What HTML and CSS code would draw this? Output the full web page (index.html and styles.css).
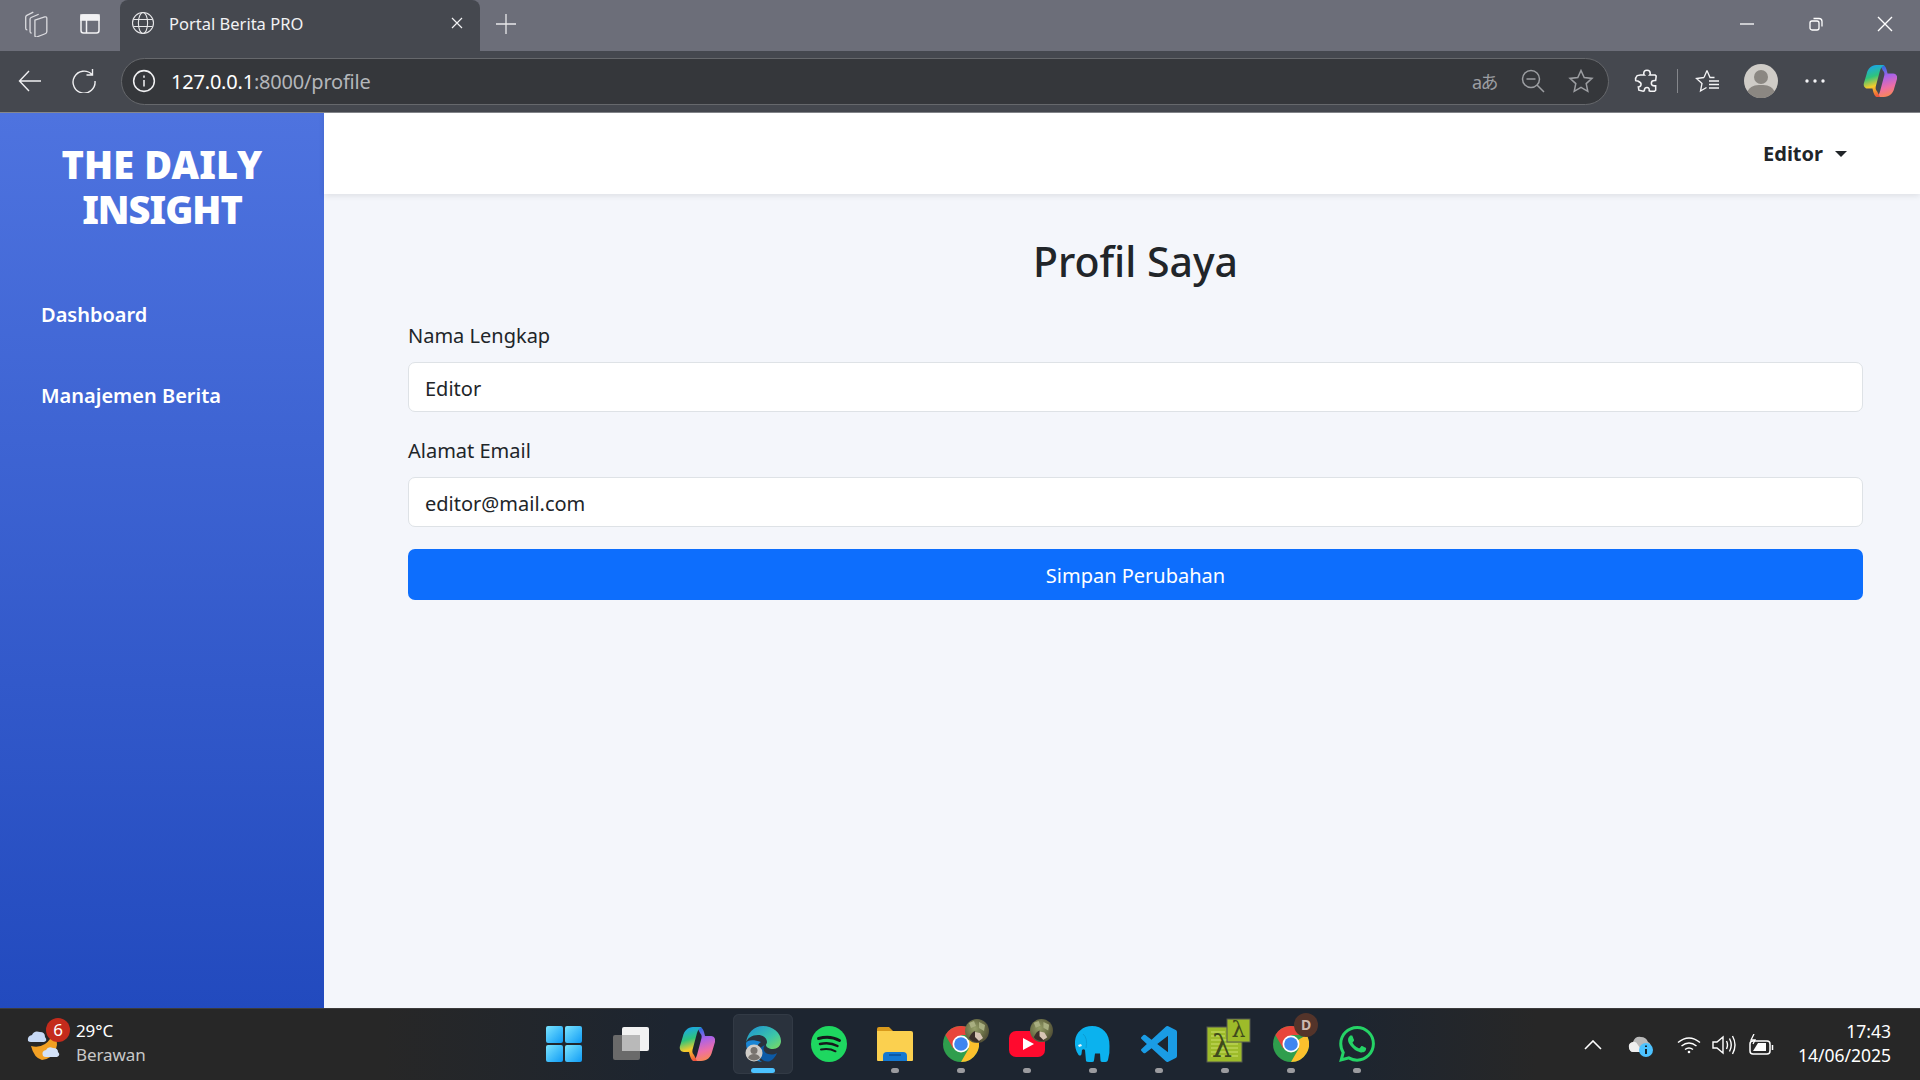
FILE: index.html
```html
<!DOCTYPE html>
<html lang="en">
<head>
  <meta charset="UTF-8">
  <title>Portal Berita PRO</title>
  <link rel="stylesheet" href="styles.css">
</head>
<body>

  <svg class="sprite" width="0" height="0">
    <defs>
      <linearGradient id="copA" x1=".4" y1="0" x2=".6" y2="1">
        <stop offset="0" stop-color="#1aa5ea"/><stop offset=".35" stop-color="#2fc47c"/><stop offset=".65" stop-color="#f6cc2b"/><stop offset="1" stop-color="#f0503a"/>
      </linearGradient>
      <linearGradient id="copB" x1=".4" y1="0" x2=".6" y2="1">
        <stop offset="0" stop-color="#1f6fe0"/><stop offset=".35" stop-color="#a862ea"/><stop offset=".7" stop-color="#ee6ea6"/><stop offset="1" stop-color="#f98a4e"/>
      </linearGradient>
      <linearGradient id="edgeA" x1="0" y1="0" x2="1" y2="1">
        <stop offset="0" stop-color="#1b8ed6"/><stop offset=".6" stop-color="#3cc6a8"/><stop offset="1" stop-color="#7fdc5c"/>
      </linearGradient>
      <linearGradient id="winA" x1="0" y1="0" x2="1" y2="1">
        <stop offset="0" stop-color="#7ae4ff"/><stop offset="1" stop-color="#0f9bf5"/>
      </linearGradient>
      <radialGradient id="camo" cx=".4" cy=".4" r=".7">
        <stop offset="0" stop-color="#97a06a"/><stop offset=".55" stop-color="#6d7148"/><stop offset="1" stop-color="#4a4632"/>
      </radialGradient>
      <symbol id="copilot" viewBox="0 0 36 36">
        <path d="M22 35h-9c3-1 4-3 5-6l4-15c1-3 1-5-1-7l-3-6h2c3 0 4 2 5 5l1 4h6c3 0 5 3 4 6l-3 10c-1 5-5 9-11 9z" fill="url(#copB)"/>
        <path d="M14 1h9c-3 1-4 3-5 6l-4 15c-1 3-1 5 1 7l3 6h-2c-3 0-4-2-5-5l-1-4H5c-3 0-5-3-4-6l3-10c1-5 5-9 10-9z" fill="url(#copA)"/>
      </symbol>
      <symbol id="chrome" viewBox="0 0 36 36">
        <circle cx="18" cy="18" r="18" fill="#2f9e4d"/>
        <path d="M18 18l-7.800 4.500L2.400 9A18 18 0 0 1 33.600 9H18z" fill="#e8453a"/>
        <path d="M18 18L33.600 9A18 18 0 0 1 18 36l7.800-13.500z" fill="#fbc02d"/>
        <circle cx="18" cy="18" r="8.500" fill="#fff"/>
        <circle cx="18" cy="18" r="6.800" fill="#3f86f0"/>
      </symbol>
      <symbol id="camoBadge" viewBox="0 0 24 24">
        <circle cx="12" cy="12" r="12" fill="url(#camo)"/>
        <path d="M4 4l5-2 2 5-5 2zM14 3l6 3-1 6-5-3z" fill="#a8ae80"/>
        <path d="M4 19c2-4 3-6 6-7l1 6 5 4c-4 2-9 1-12-3z" fill="#3b2f2a"/>
        <path d="M10 13l5 1 3 5-4 3-4-4z" fill="#d8c5b5"/>
      </symbol>
    </defs>
  </svg>

  <div class="tabstrip">
    <svg class="ico strip-a" viewBox="0 0 24 24" fill="none" stroke="#dcdce0" stroke-width="1.200">
      <path d="M11 8.500l9-3q2-.5 2 1.500v12q0 1.500-1.500 2l-8 3q-1.500.3-1.500-1.500z"/>
      <path d="M8 20.500q-1.500 0-1.500-1.500V7.500q0-1 1-1.500l7-3"/>
      <path d="M4 17.500q-1.500 0-1.500-1.500V5.500q0-1 1-1.500l6-3"/>
    </svg>
    <svg class="ico strip-b" viewBox="0 0 24 24" fill="none" stroke="#f2f2f4" stroke-width="1.500">
      <rect x="3" y="3" width="18" height="18" rx="2.500"/>
      <path d="M3 3h18v5H3z" fill="#f2f2f4"/>
      <path d="M8.500 8v13"/>
    </svg>
    <div class="tab">
      <svg class="ico" viewBox="0 0 24 24" fill="none" stroke="#e6e6e8" stroke-width="1.100">
        <circle cx="12" cy="12" r="10.500"/>
        <ellipse cx="12" cy="12" rx="4.600" ry="10.500"/>
        <path d="M2.300 8.500h19.400M2.300 15.500h19.400"/>
      </svg>
      <span class="tab-title">Portal Berita PRO</span>
      <svg class="tab-close" viewBox="0 0 12 12" stroke="#f2f2f4" stroke-width="1.200"><path d="M1 1l10 10M11 1L1 11"/></svg>
    </div>
    <svg class="tab-plus" viewBox="0 0 22 22" stroke="#e8e8ea" stroke-width="1.300"><path d="M11 1v20M1 11h20"/></svg>
    <div class="win-btns">
      <svg class="ico" viewBox="0 0 16 16" stroke="#fff" stroke-width="1.300"><path d="M1 8h14"/></svg>
      <svg class="ico" viewBox="0 0 16 16" fill="none" stroke="#fff" stroke-width="1.300"><rect x="2" y="5" width="9" height="9" rx="2"/><path d="M5.500 2.500H11q3 0 3 3v5"/></svg>
      <svg class="ico" viewBox="0 0 16 16" stroke="#fff" stroke-width="1.400"><path d="M1 1l14 14M15 1L1 15"/></svg>
    </div>
  </div>

  <div class="toolbar">
    <svg class="ico tool-back" viewBox="0 0 24 24" fill="none" stroke="#f0f0f2" stroke-width="1.400"><path d="M23 12H1.500M11 2L1.500 12 11 22"/></svg>
    <svg class="ico tool-reload" viewBox="0 0 24 24" fill="none" stroke="#f0f0f2" stroke-width="1.400"><path d="M20 5.500A11 11 0 1 0 23 12M20.500 0v6h-6"/></svg>
    <div class="addressbar">
      <span class="info-wrap">
        <svg class="ico" viewBox="0 0 22 22" fill="none" stroke="#f0f0f2" stroke-width="1.400"><circle cx="11" cy="11" r="9.500"/><path d="M11 10v6M11 6v2"/></svg>
      </span>
      <span class="url"><span class="url-host">127.0.0.1</span>:8000/profile</span>
      <span class="addr-actions">
        <span class="translate">aあ</span>
        <svg class="ico addr-ico" viewBox="0 0 24 24" fill="none" stroke="#9c9ea2" stroke-width="1.500"><circle cx="10" cy="10" r="8.500"/><path d="M16 16l7 7M5.500 10h9"/></svg>
        <svg class="ico addr-ico" viewBox="0 0 24 24" fill="none" stroke="#9c9ea2" stroke-width="1.500"><path d="M12 1.500l3.200 7 7.800.9-5.800 5.200 1.600 7.700L12 18.400l-6.800 3.900 1.600-7.700L1 9.400l7.800-.9z"/></svg>
      </span>
    </div>
    <svg class="ico tool-ext" viewBox="0 0 24 24" fill="none" stroke="#f4f4f6" stroke-width="1.400">
      <path d="M9 5q0-3 3-3t3 3q0 1-.5 1.500h5l1 1-.5 4h-1q-3 0-3 2.500t3 2.500h1v4l-1 1h-4l-1-.5q.5-3-2-3t-2.500 3l-1 .5-4-1-.5-3q2 0 2.500-2T3.500 12q-2 0-2-.5Q1 9 3 7l3-.5h3.500Q9 6 9 5z"/>
    </svg>
    <span class="tool-sep"></span>
    <svg class="ico tool-fav" viewBox="0 0 26 24" fill="none" stroke="#f4f4f6" stroke-width="1.300"><path d="M12 1.500l3 7h4.500M9 8.500L1.500 9.500l5.500 5-1.500 7.500 6-3.500M12 1.500L9 8.500M14 12h10M14 15.500h10M14 19h10"/></svg>
    <svg class="tool-avatar" viewBox="0 0 34 34">
      <circle cx="17" cy="17" r="17" fill="#cfccc7"/>
      <circle cx="17" cy="13" r="7" fill="#8b8782"/>
      <path d="M3.500 27.500C6 22 11 21 17 21s11 1 13.500 6.500A17 17 0 0 1 3.500 27.500z" fill="#8b8782"/>
    </svg>
    <svg class="tool-dots" viewBox="0 0 20 4" fill="#f4f4f6"><circle cx="2" cy="2" r="1.700"/><circle cx="10" cy="2" r="1.700"/><circle cx="18" cy="2" r="1.700"/></svg>
    <svg class="tool-copilot"><use href="#copilot"/></svg>
  </div>

  <div class="app">
    <aside class="sidebar">
      <div class="brand">THE DAILY<br><span class="brand-second">INSIGHT</span></div>
      <a class="side-link">Dashboard</a>
      <a class="side-link">Manajemen Berita</a>
    </aside>
    <div class="main">
      <nav class="topnav">
        <span class="user-menu">Editor<span class="caret"></span></span>
      </nav>
      <section class="content">
        <h2 class="page-title">Profil Saya</h2>
        <form>
          <div class="field">
            <label class="field-label">Nama Lengkap</label>
            <input class="field-input" type="text" value="Editor">
          </div>
          <div class="field">
            <label class="field-label">Alamat Email</label>
            <input class="field-input" type="email" value="editor@mail.com">
          </div>
          <button class="save-btn" type="button">Simpan Perubahan</button>
        </form>
      </section>
    </div>
  </div>

  <footer class="taskbar">
    <div class="weather">
      <svg class="weather-ico" viewBox="0 0 44 42">
        <path d="M4 27q8 2 14-2 6-4 8-12 6 8 3 17-4 10-14 11Q7 39 4 27z" fill="#f2a024"/>
        <path d="M1 22q-1-5 4-6 2-5 8-3 5 0 5 5 3 4-1 5H4q-2 0-3-1z" fill="#c7d9f5"/>
        <path d="M16 37q-2-5 3-6 2-4 7-2 5 0 5 4 3 3-1 5H19q-2 0-3-1z" fill="#d4e2f8"/>
        <circle cx="31" cy="11" r="12" fill="#c42b1c"/>
        <text class="weather-count" x="31" y="17" text-anchor="middle">6</text>
      </svg>
      <div class="weather-text">
        <div class="weather-temp">29°C</div>
        <div class="weather-desc">Berawan</div>
      </div>
    </div>

    <div class="task-icons">
      <div class="task-item">
        <svg class="ico-36" viewBox="0 0 36 36">
          <rect x="-1" y="0" width="17" height="17" rx="2" fill="url(#winA)"/>
          <rect x="18" y="0" width="17" height="17" rx="2" fill="url(#winA)"/>
          <rect x="-1" y="19" width="17" height="17" rx="2" fill="url(#winA)"/>
          <rect x="18" y="19" width="17" height="17" rx="2" fill="url(#winA)"/>
        </svg>
      </div>
      <div class="task-item">
        <svg class="ico-36" viewBox="0 0 36 36">
          <rect x="0" y="9" width="27" height="25" rx="2" fill="#6a6a6a"/>
          <rect x="9" y="1" width="27" height="24" rx="2" fill="#f2f2f2"/>
          <rect x="9" y="9" width="18" height="16" fill="#b9b9b9"/>
        </svg>
      </div>
      <div class="task-item">
        <svg class="ico-36"><use href="#copilot"/></svg>
      </div>
      <div class="task-item task-active">
        <svg class="ico-36" viewBox="0 0 36 36">
          <path d="M1 17C2 7 9 0 18 0c10 0 18 7 18 15 0 5-4 8-8 8-4 0-7-2-7-4 0-1 1-1.500 1-3 0-4-4-7-9-7-6 0-11 3-12 8z" fill="url(#edgeA)"/>
          <path d="M32 27c-2 1-3.500 1.500-5.500 1.500-5 0-8-3-8-6 0-1.500.6-2.500 1.500-3-5 .5-7 6-5.500 10 1.500 4 5 6.500 9 6 3.500-.5 6.500-4 8.500-8.500z" fill="#0c5aa6"/>
          <path d="M1 17c0 9 6 18 16 19-5-3-7-9-5-15 .5-2 2-4 4-5-8-3-14-2-15 1z" fill="#1a85d4"/>
          <circle cx="9" cy="27" r="8.500" fill="#cfccc7"/>
          <circle cx="9" cy="24.500" r="3.500" fill="#77736e"/>
          <path d="M3 32c1-3 3-4 6-4s5 1 6 4a8.500 8.500 0 0 1-12 0z" fill="#77736e"/>
        </svg>
        <span class="pill pill-active"></span>
      </div>
      <div class="task-item">
        <svg class="ico-36" viewBox="0 0 36 36">
          <circle cx="18" cy="18" r="18" fill="#1ed760"/>
          <g fill="none" stroke="#16181c" stroke-linecap="round">
            <path d="M7.500 12.500c7-2 15-1.500 21 2" stroke-width="3"/>
            <path d="M9 18c6-1.500 12-1 17.500 2" stroke-width="2.500"/>
            <path d="M10 23.500c5-1 10-.7 14.500 1.800" stroke-width="2"/>
          </g>
        </svg>
      </div>
      <div class="task-item">
        <svg class="ico-36" viewBox="0 0 36 36">
          <path d="M0 3q0-2 2-2h10l4 4v6H0z" fill="#d99a1c"/>
          <path d="M0 5h34q2 0 2 2v27q0 1-1 1H1q-1 0-1-1z" fill="#fbd04f"/>
          <path d="M6 35v-5q0-4 4-4h16q4 0 4 4v5z" fill="#1478d2"/>
          <path d="M12 29h12" stroke="#0b4f96" stroke-width="1.500"/>
        </svg>
        <span class="pill"></span>
      </div>
      <div class="task-item">
        <svg class="ico-36"><use href="#chrome"/><use href="#camoBadge" x="22" y="-7" width="24" height="24"/></svg>
        <span class="pill"></span>
      </div>
      <div class="task-item">
        <svg class="ico-36" viewBox="0 0 36 36">
          <rect x="0" y="5" width="36" height="26" rx="7" fill="#ff0a2e"/>
          <path d="M14 12l11 6-11 6z" fill="#fff"/>
          <use href="#camoBadge" x="21" y="-7" width="23" height="23"/>
        </svg>
        <span class="pill"></span>
      </div>
      <div class="task-item">
        <svg class="ico-36" viewBox="0 0 36 36">
          <path d="M17 0C8 0 1 6 0 15c-.5 5 1 10 3 13 1 2 3 2 3.500 0l.5-4c1-1 2-1 3 0l1 11q.2 1 3 1h3q2 0 2-1.500l1-7h5l.5 7q0 1.500 3 1.500h2q2 0 2.500-2 2-8 1.500-14C35 7 27 0 17 0z" fill="#0bb2ee"/>
          <path d="M3 19l3-1 1 2-3 1z" fill="#e7f5fb"/>
          <path d="M8 8q5 4 3 14" fill="none" stroke="#0a9cd4" stroke-width="1"/>
        </svg>
        <span class="pill"></span>
      </div>
      <div class="task-item">
        <svg class="ico-36" viewBox="0 0 24 24">
          <path d="M23.150 2.587L18.210.21a1.494 1.494 0 0 0-1.705.29l-9.460 8.630-4.120-3.128a.999.999 0 0 0-1.276.057L.327 7.261A1 1 0 0 0 .326 8.740L3.899 12 .326 15.260a1 1 0 0 0 .001 1.479L1.650 17.940a.999.999 0 0 0 1.276.057l4.120-3.128 9.460 8.630a1.492 1.492 0 0 0 1.704.29l4.942-2.377A1.500 1.500 0 0 0 24 20.060V3.939a1.500 1.500 0 0 0-.850-1.352zm-5.146 14.861L10.826 12l7.178-5.448v10.896z" fill="#1a9ce5"/>
        </svg>
        <span class="pill"></span>
      </div>
      <div class="task-item">
        <svg class="ico-36" viewBox="0 0 36 36">
          <rect x="0" y="1" width="35" height="35" fill="#9dbb2a" stroke="#55584e" stroke-width="1"/>
          <path d="M4 6h14M4 10h14M4 14h27M4 18h27M4 22h27M4 26h27M4 30h27" stroke="#bcd454" stroke-width="1.500"/>
          <text class="lambda lambda-lg" x="15" y="31" text-anchor="middle">λ</text>
          <rect x="20" y="-7" width="23" height="23" fill="#9dbb2a" stroke="#55584e" stroke-width="1"/>
          <text class="lambda" x="31.500" y="11" text-anchor="middle">λ</text>
        </svg>
        <span class="pill"></span>
      </div>
      <div class="task-item">
        <svg class="ico-36">
          <use href="#chrome"/>
          <circle cx="33" cy="-1" r="12" fill="#54342a"/>
          <text class="chrome-letter" x="33" y="4" text-anchor="middle">D</text>
        </svg>
        <span class="pill"></span>
      </div>
      <div class="task-item">
        <svg class="ico-36" viewBox="0 0 24 24">
          <path d="M17.472 14.382c-.297-.149-1.758-.867-2.030-.967-.273-.099-.471-.148-.670.150-.197.297-.767.966-.940 1.164-.173.199-.347.223-.644.075-.297-.150-1.255-.463-2.390-1.475-.883-.788-1.480-1.761-1.653-2.059-.173-.297-.018-.458.130-.606.134-.133.298-.347.446-.520.149-.174.198-.298.298-.497.099-.198.050-.371-.025-.520-.075-.149-.669-1.612-.916-2.207-.242-.579-.487-.500-.669-.510-.173-.008-.371-.010-.570-.010-.198 0-.520.074-.792.372-.272.297-1.040 1.016-1.040 2.479 0 1.462 1.065 2.875 1.213 3.074.149.198 2.096 3.200 5.077 4.487.709.306 1.262.489 1.694.625.712.227 1.360.195 1.871.118.571-.085 1.758-.719 2.006-1.413.248-.694.248-1.289.173-1.413-.074-.124-.272-.198-.570-.347m-5.421 7.403h-.004a9.870 9.870 0 0 1-5.031-1.378l-.361-.214-3.741.982.998-3.648-.235-.374a9.860 9.860 0 0 1-1.510-5.260c.001-5.450 4.436-9.884 9.888-9.884 2.640 0 5.122 1.030 6.988 2.898a9.825 9.825 0 0 1 2.893 6.994c-.003 5.450-4.437 9.884-9.885 9.884m8.413-18.297A11.815 11.815 0 0 0 12.050 0C5.495 0 .160 5.335.157 11.892c0 2.096.547 4.142 1.588 5.945L.057 24l6.305-1.654a11.882 11.882 0 0 0 5.683 1.448h.005c6.554 0 11.890-5.335 11.893-11.893a11.821 11.821 0 0 0-3.480-8.413z" fill="#25d366"/>
        </svg>
        <span class="pill"></span>
      </div>
    </div>

    <div class="tray">
      <svg class="tray-chevron" viewBox="0 0 18 10" fill="none" stroke="#fff" stroke-width="1.600"><path d="M1 9l8-8 8 8"/></svg>
      <svg class="tray-cloud" viewBox="0 0 26 24">
        <path d="M1 15q-1-5 4-6 2-6 8-5 5 0 7 5 3 1 3 6 0 4-4 4H5q-3 0-4-4z" fill="#b9b9b9"/>
        <path d="M1 15q-1-5 4-6 3-1 5 3l5 7H5q-3 0-4-4z" fill="#eeeeee"/>
        <circle cx="18" cy="17" r="7" fill="#4cc2ff"/>
        <path d="M18 16v5M18 12.500v1.600" stroke="#111" stroke-width="1.800"/>
      </svg>
      <svg class="tray-wifi" viewBox="0 0 24 18" fill="none" stroke="#fff" stroke-width="1.500">
        <path d="M1 6.500q11-9 22 0M4.500 10q7.500-6 15 0M8 13.500q4-3 8 0"/>
        <circle cx="12" cy="16" r="1.300" fill="#fff" stroke="none"/>
      </svg>
      <svg class="tray-volume" viewBox="0 0 24 20" fill="none" stroke="#fff" stroke-width="1.400">
        <path d="M1 7v6h4l6 5V2L5 7zM14.500 6q2 4 0 8M17.500 3.500q3.500 6.500 0 13M20.500 1q5 9 0 18"/>
      </svg>
      <svg class="tray-battery" viewBox="0 0 26 22" fill="none" stroke="#fff" stroke-width="1.500">
        <rect x="2" y="7" width="20" height="13" rx="3"/>
        <path d="M24.500 11v5"/>
        <path d="M5 17l5-8h8v8z" fill="#fff" stroke="none"/>
        <path d="M6 0L3 6h4l-2 4" stroke-width="1.300"/>
      </svg>
      <div class="clock">
        <div>17:43</div>
        <div>14/06/2025</div>
      </div>
    </div>
  </footer>

</body>
</html>
```

FILE: styles.css
```css
:root {
  --sans: "Noto Sans", "Open Sans", Arial, sans-serif;
}

* {
  box-sizing: border-box;
}

html, body {
  height: 100%;
}

body {
  margin: 0;
  display: flex;
  flex-direction: column;
  height: 1080px;
  overflow: hidden;
  font-family: var(--sans);
  color: #212529;
  background: #f4f6fb;
}

.sprite {
  display: block;
  height: 0;
}

.ico {
  display: block;
  flex: none;
  width: 24px;
  height: 24px;
}

/* browser tab strip */
.tabstrip {
  display: flex;
  align-items: center;
  height: 51px;
  flex: none;
  padding: 0 0 3px 24px;
  background: #6c6e79;
}

.strip-a {
  width: 26px;
  height: 26px;
  margin-left: -1px;
}

.strip-b {
  margin-left: 29px;
  margin-right: 18px;
}

.tab {
  display: flex;
  align-items: center;
  align-self: stretch;
  width: 360px;
  margin-bottom: -3px;
  padding: 0 17px 5px 11px;
  background: #45484f;
  border-radius: 8px 8px 0 0;
  color: #f2f2f4;
  font-size: 16.500px;
}

.tab-title {
  flex: 1;
  margin-left: 14px;
}

.tab-close {
  width: 12px;
  height: 12px;
}

.tab-plus {
  width: 22px;
  height: 22px;
  margin-left: 15px;
}

.win-btns {
  display: flex;
  gap: 45px;
  margin-left: auto;
  padding-right: 23px;
}

.win-btns .ico {
  width: 24px;
  height: 16px;
}

/* browser toolbar */
.toolbar {
  display: flex;
  align-items: center;
  height: 62px;
  flex: none;
  padding-left: 18px;
  padding-bottom: 1px;
  background: #45484f;
  border-bottom: 1px solid #85878c;
}

.tool-reload {
  margin-left: 30px;
}

.addressbar {
  display: flex;
  align-items: center;
  width: 1488px;
  height: 47px;
  margin-left: 25px;
  padding-left: 7px;
  background: #35373b;
  border: 1.500px solid #66686c;
  border-radius: 24px;
}

.info-wrap {
  display: flex;
  align-items: center;
  justify-content: center;
  width: 30px;
  height: 34px;
}

.url {
  margin-left: 12px;
  color: #b4b6ba;
  font-size: 20px;
  letter-spacing: -.2px;
}

.url-host {
  color: #fff;
}

.addr-actions {
  display: flex;
  align-items: center;
  gap: 22px;
  margin-left: auto;
  padding-right: 14px;
}

.translate {
  width: 26px;
  color: #9c9ea2;
  font-family: "Noto Sans", "Noto Sans CJK JP", sans-serif;
  font-size: 18px;
  letter-spacing: -1.500px;
  white-space: nowrap;
}

.addr-ico {
  width: 26px;
}

.tool-ext {
  width: 26px;
  height: 26px;
  margin-left: 25px;
}

.tool-sep {
  width: 1px;
  height: 24px;
  margin-left: 17px;
  background: #85878c;
}

.tool-fav {
  width: 26px;
  height: 24px;
  margin-left: 17px;
}

.tool-avatar {
  width: 34px;
  height: 34px;
  margin-left: 23px;
}

.tool-dots {
  width: 20px;
  height: 4px;
  margin-left: 27px;
}

.tool-copilot {
  width: 34px;
  height: 34px;
  margin-left: 38px;
}

/* page */
.app {
  display: flex;
  flex: 1;
  min-height: 0;
}

.sidebar {
  width: 324px;
  flex: none;
  padding: 29px 41px 0;
  background: linear-gradient(180deg, #4e73df, #224abe);
  color: #fff;
}

.brand {
  margin: 0 -41px 61px;
  text-align: center;
  font-size: 38px;
  font-weight: 900;
  line-height: 45px;
  letter-spacing: .1px;
}

.brand-second {
  letter-spacing: -1px;
}

.side-link {
  display: block;
  height: 81px;
  padding-top: 7px;
  font-size: 20px;
  font-weight: 600;
  line-height: 30px;
}

.main {
  flex: 1;
  display: flex;
  flex-direction: column;
  min-width: 0;
}

.topnav {
  display: flex;
  align-items: center;
  justify-content: flex-end;
  height: 81px;
  flex: none;
  padding-right: 73px;
  background: #fff;
  box-shadow: 0 2px 6px rgba(0, 0, 0, .09);
}

.user-menu {
  display: flex;
  align-items: center;
  font-size: 20px;
  font-weight: 700;
}

.caret {
  width: 0;
  height: 0;
  margin-left: 12px;
  border-top: 6px solid #212529;
  border-left: 6px solid transparent;
  border-right: 6px solid transparent;
}

.content {
  padding: 37px 57px 0 84px;
}

.page-title {
  margin: 0 0 31px;
  text-align: center;
  font-size: 41px;
  font-weight: 500;
  line-height: 60px;
}

.field {
  margin-bottom: 25px;
}

.field-label {
  display: block;
  margin-bottom: 12px;
  font-size: 20px;
  line-height: 28px;
}

.field-input {
  display: block;
  width: 100%;
  height: 50px;
  padding: 2px 16px 0;
  border: 1px solid #dee2e6;
  border-radius: 7px;
  background: #fff;
  color: #212529;
  font-family: var(--sans);
  font-size: 20px;
}

.save-btn {
  display: block;
  width: 100%;
  height: 51px;
  margin-top: -3px;
  padding: 2px 0 0;
  border: none;
  border-radius: 7px;
  background: #0d6efd;
  color: #fff;
  font-family: var(--sans);
  font-size: 20px;
}

/* windows taskbar */
.taskbar {
  display: flex;
  height: 72px;
  flex: none;
  background: linear-gradient(90deg, #272727 0, #272727 20%, #1d2530 35%, #1d2530 70%, #272727 80%);
  border-top: 1px solid #3c3c3c;
  color: #fff;
}

.weather {
  display: flex;
  width: 532px;
  flex: none;
  padding: 10px 0 0 27px;
}

.weather-ico {
  width: 44px;
  height: 42px;
  overflow: visible;
}

.weather-count {
  font: 17px var(--sans);
  fill: #fff;
}

.weather-text {
  margin-left: 5px;
  font-size: 17px;
  line-height: 24px;
  letter-spacing: -.1px;
}

.weather-desc {
  color: #c8c8c8;
}

.task-icons {
  display: flex;
}

.task-item {
  display: flex;
  flex-direction: column;
  align-items: center;
  width: 60px;
  height: 60px;
  margin: 5px 3px;
  padding-top: 12px;
  border-radius: 6px;
}

.task-active {
  background: #2a323d;
  box-shadow: inset 0 0 0 1px #323a45;
}

.ico-36 {
  display: block;
  flex: none;
  width: 36px;
  height: 36px;
  overflow: visible;
}

.pill {
  width: 8px;
  height: 5px;
  margin-top: 6px;
  border-radius: 3px;
  background: #9b9b9f;
}

.pill-active {
  width: 24px;
  background: #4cc2ff;
}

.lambda {
  font: 400 22px "DejaVu Serif", serif;
  fill: #3f4a1c;
}

.lambda-lg {
  font-size: 32px;
}

.chrome-letter {
  font: 700 14px var(--sans);
  fill: #cdb9ae;
}

.tray {
  display: flex;
  align-items: center;
  flex: 1;
  justify-content: flex-end;
  padding: 0 29px 0 0;
}

.tray-chevron {
  width: 18px;
  height: 10px;
  margin-right: 26px;
}

.tray-cloud {
  width: 26px;
  height: 24px;
  margin-right: 23px;
}

.tray-wifi {
  width: 24px;
  height: 18px;
  margin-right: 11px;
}

.tray-volume {
  width: 24px;
  height: 20px;
  margin-right: 12px;
}

.tray-battery {
  width: 26px;
  height: 22px;
}

.clock {
  width: 117px;
  padding-bottom: 4px;
  text-align: right;
  font-size: 17.500px;
  line-height: 24px;
}
```
